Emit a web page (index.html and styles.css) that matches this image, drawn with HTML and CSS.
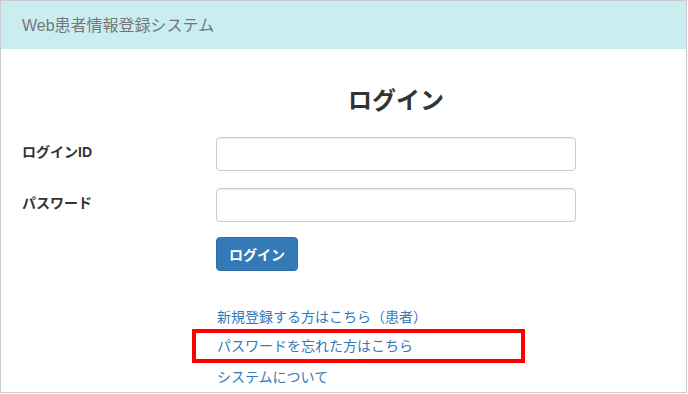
FILE: index.html
```html
<!DOCTYPE html>
<html lang="ja">
<head>
  <meta charset="UTF-8">
  <meta name="viewport" content="width=device-width, initial-scale=1.0">
  <title>ログイン | Web患者情報登録システム</title>
  <link rel="stylesheet" href="styles.css">
</head>
<body>

  <div class="frame">
    <header class="navbar">
      <span class="brand">Web患者情報登録システム</span>
    </header>

    <form class="login">
      <h2 class="title">ログイン</h2>

      <label class="label" for="login-id">ログインID</label>
      <input class="field" id="login-id" type="text">

      <label class="label" for="password">パスワード</label>
      <input class="field" id="password" type="password">

      <div class="actions">
        <button type="button" class="btn">ログイン</button>
      </div>

      <ul class="links">
        <li><a href="#">新規登録する方はこちら（患者）</a></li>
        <li class="marked"><a href="#">パスワードを忘れた方はこちら</a></li>
        <li><a href="#">システムについて</a></li>
      </ul>
    </form>
  </div>

</body>
</html>
```

FILE: styles.css
```css
/* Basic Reset */
* {
  margin: 0;
  padding: 0;
  box-sizing: border-box;
}

body {
  font-family: "Liberation Sans", "Noto Sans CJK JP", sans-serif;
  font-size: 14px;
  color: #333;
  background: #fff;
}

.frame {
  width: 687px;
  height: 393px;
  border: 1px solid #ccc;
  overflow: hidden;
}

.navbar {
  height: 48px;
  background: #c9edf0;
  padding: 0 0 3px 21px;
  display: flex;
  align-items: center;
}

.brand {
  font-size: 16px;
  color: #777;
}

/* form grid: label column + field column */
.login {
  display: grid;
  grid-template-columns: 194px 360px;
  padding: 37px 0 0 21px;
  align-items: start;
}

.title {
  grid-column: 2;
  text-align: center;
  font-size: 24px;
  line-height: 30px;
  font-weight: bold;
  margin-bottom: 21px;
}

.label {
  grid-column: 1;
  font-weight: bold;
  line-height: 20px;
  padding-top: 5px;
}

.field {
  grid-column: 2;
  height: 34px;
  border: 1px solid #ccc;
  border-radius: 4px;
  box-shadow: inset 0 1px 1px rgba(0, 0, 0, 0.075);
  padding: 6px 12px;
  font: inherit;
  margin-bottom: 17px;
}

#password {
  margin-bottom: 15px;
}

.actions {
  grid-column: 2;
}

.btn {
  height: 34px;
  padding: 0 12px;
  font: inherit;
  font-weight: bold;
  color: #fff;
  background: #337ab7;
  border: 1px solid #2e6da4;
  border-radius: 4px;
  cursor: pointer;
}

.links {
  grid-column: 2;
  list-style: none;
  margin-top: 31px;
}

.links li {
  line-height: 30px;
  padding-left: 1px;
}

.links a {
  color: #337ab7;
  text-decoration: none;
}

/* highlighted link */
.links .marked {
  width: 333px;
  margin: -3px 0 -1px -24px;
  padding-left: 21px;
  border: 4px solid #f00;
  line-height: 26px;
}
```
